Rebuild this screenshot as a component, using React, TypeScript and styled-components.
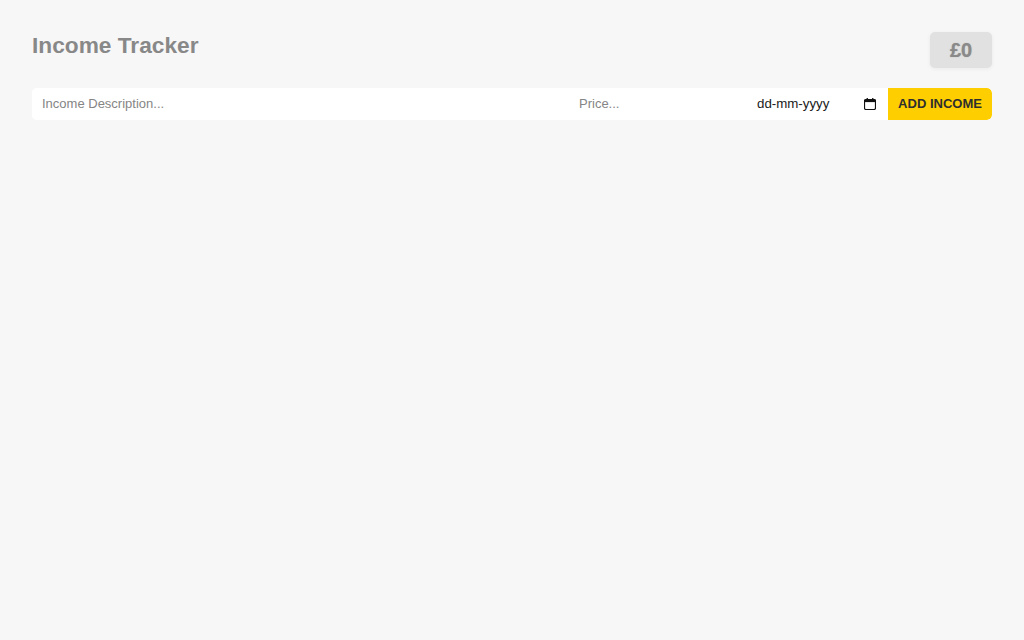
import React, { useState } from "react";
import styled, { createGlobalStyle } from "styled-components";

const GlobalStyle = createGlobalStyle`
  html, body {
    margin: 0;
    padding: 0;
    background: #f7f7f7;
    font-family: "Liberation Sans", Arial, sans-serif;
  }
  * { box-sizing: border-box; }
`;

const Page = styled.div`
  min-height: 640px;
  padding: 32px;
  background: #f7f7f7;
`;

const Header = styled.header`
  display: flex;
  justify-content: space-between;
  align-items: flex-start;
  margin-bottom: 20px;
`;

const Title = styled.h1`
  margin: 0;
  padding-top: 0;
  font-size: 22.7px;
  line-height: 26px;
  font-weight: 700;
  color: #888888;
`;

const Total = styled.div`
  height: 36px;
  min-width: 62px;
  padding: 0 18px;
  display: flex;
  align-items: center;
  justify-content: center;
  border-radius: 5px;
  background: #e1e1e1;
  box-shadow: 0 1px 4px rgba(0, 0, 0, 0.06);
  font-size: 20px;
  font-weight: 700;
  color: #8a8a8a;
  text-shadow: 0 0 1px rgba(120, 120, 120, 0.6);
`;

const Form = styled.form`
  display: grid;
  grid-template-columns: minmax(0, 3fr) minmax(0, 1fr) 140px 104px;
  height: 32px;
  background: #ffffff;
  border-radius: 5px;
  overflow: hidden;
`;

const Field = styled.input`
  min-width: 0;
  height: 100%;
  border: none;
  outline: none;
  background: #ffffff;
  padding: 0 10px 2px;
  font-family: "Liberation Sans", Arial, sans-serif;
  font-size: 13px;
  color: #333333;
  &::placeholder {
    color: #858585;
  }
`;

const DateBox = styled.label`
  display: flex;
  align-items: center;
  height: 100%;
  padding: 0 12px 0 9px;
  background: #ffffff;
  cursor: text;
`;

const DateText = styled.input`
  flex: 1 1 0;
  min-width: 0;
  height: 100%;
  border: none;
  outline: none;
  background: transparent;
  padding: 0 0 2px;
  font-family: "Liberation Sans", Arial, sans-serif;
  font-size: 13.3px;
  color: #1a1a1a;
  &::placeholder {
    color: #1a1a1a;
    opacity: 1;
  }
`;

const CalendarIcon = styled.svg`
  flex: 0 0 auto;
  width: 12px;
  height: 12px;
  display: block;
`;

const AddButton = styled.button`
  height: 100%;
  border: none;
  border-radius: 0 5px 5px 0;
  background: #ffce00;
  color: #2e2e2e;
  font-family: "Liberation Sans", Arial, sans-serif;
  font-size: 13px;
  font-weight: 700;
  text-transform: uppercase;
  cursor: pointer;
  padding: 0 0 2px;
`;

export default function App() {
  const [desc, setDesc] = useState("");
  const [price, setPrice] = useState("");
  const [date, setDate] = useState("");
  const total = 0;

  return (
    <>
      <GlobalStyle />
      <Page>
        <Header>
          <Title>Income Tracker</Title>
          <Total>£{total}</Total>
        </Header>
        <Form onSubmit={(e) => e.preventDefault()}>
          <Field
            type="text"
            placeholder="Income Description..."
            value={desc}
            onChange={(e) => setDesc(e.target.value)}
          />
          <Field
            type="text"
            placeholder="Price..."
            value={price}
            onChange={(e) => setPrice(e.target.value)}
          />
          <DateBox>
            <DateText
              type="text"
              placeholder="dd-mm-yyyy"
              value={date}
              onChange={(e) => setDate(e.target.value)}
            />
            <CalendarIcon viewBox="0 0 12 12" aria-hidden="true">
              <path
                d="M2 1.5h8A1.5 1.5 0 0 1 11.5 3v7A1.5 1.5 0 0 1 10 11.5H2A1.5 1.5 0 0 1 .5 10V3A1.5 1.5 0 0 1 2 1.5Z"
                fill="none"
                stroke="#111"
                strokeWidth="1.2"
              />
              <rect x="0.5" y="1.5" width="11" height="2.6" fill="#111" />
              <rect x="2.6" y="0" width="1.3" height="2" fill="#111" />
              <rect x="8.1" y="0" width="1.3" height="2" fill="#111" />
            </CalendarIcon>
          </DateBox>
          <AddButton type="submit">Add Income</AddButton>
        </Form>
      </Page>
    </>
  );
}
